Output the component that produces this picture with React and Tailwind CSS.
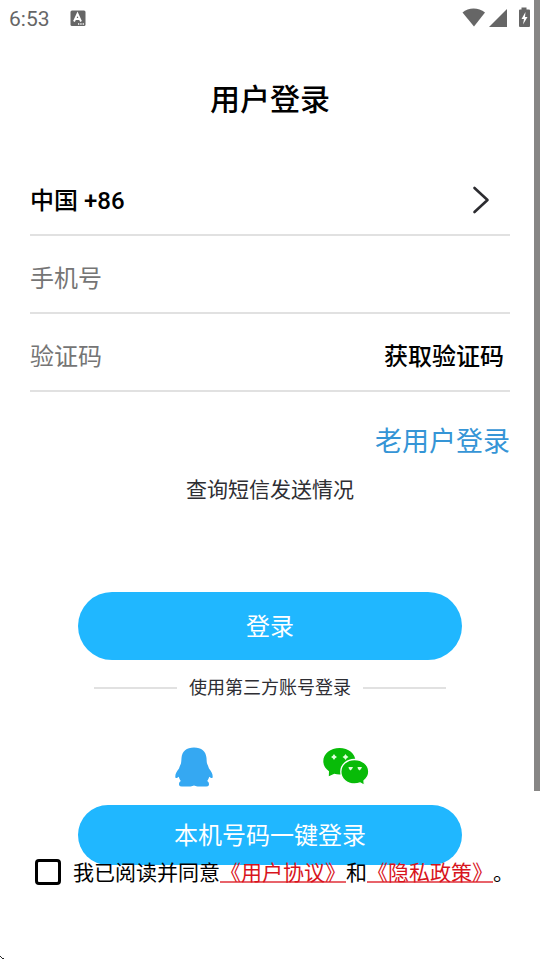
import React from "react";

function StatusBar() {
  return (
    <header className="flex h-9 items-center justify-between pl-[9px] pr-[10px] text-[#666]">
      <div className="flex items-center gap-5">
        <span className="pt-0.5 font-[Roboto,sans-serif] text-[21px] leading-9">6:53</span>
        <svg className="h-4 w-4" viewBox="0 0 16 16" aria-hidden="true">
          <rect x="0.5" y="0.5" width="15" height="15.5" rx="1.5" fill="#666" />
          <path d="M4 11.5 7.500 3.800 11 11.500M5.300 9h4.400" fill="none" stroke="#fff" strokeWidth="1.900" />
          <path d="M8 14h1.300M10.300 14h1.300M12.600 14h1.300" stroke="#fff" strokeWidth="1.300" />
        </svg>
      </div>
      <svg className="h-6 w-[68px]" viewBox="0 0 68 24" fill="#666" aria-hidden="true">
        <path d="M0.500 6.500C6.500 1 16.500 1 23 6.500L12 20.500Z" />
        <path d="M45 3V21H27Z" />
        <path d="M59.500 1.500h5v2h2.500a1 1 0 0 1 1 1v15.500a1 1 0 0 1-1 1H58a1 1 0 0 1-1-1V4.500a1 1 0 0 1 1-1h1.500Z" />
        <path d="M63.500 6 59.500 13H62L61 18.500 65.500 11H63Z" fill="#fff" />
      </svg>
    </header>
  );
}

function QQIcon() {
  return (
    <svg className="h-10 w-[38px]" viewBox="0 0 38 40" fill="#35a8f2" aria-hidden="true">
      <path d="M19 0.500C11.500 0.500 7 4.500 6.500 11C6.300 14 6.300 15.500 5.800 17C4.800 19 4.500 20 4 21.500C1.500 24.500 0.300 27 0.300 29.500C0.300 31.500 1.500 31.500 3.800 29.800C4.300 31.500 4.800 32.800 5.800 34C4.300 34.800 4 36 4 37.400C4 39 5.500 39.500 9 39.500H15.500C17 39.500 18 38.600 19 38.600C20 38.600 21 39.500 22.500 39.500H29C32.500 39.500 34 39 34 37.400C34 36 33.700 34.800 32.200 34C33.200 32.800 33.700 31.500 34.200 29.800C36.500 31.500 37.700 31.500 37.700 29.500C37.700 27 36.500 24.500 34 21.500C33.500 20 33.200 19 32.200 17C31.700 15.500 31.700 14 31.500 11C31 4.500 26.500 0.500 19 0.500Z" />
    </svg>
  );
}

function WeChatIcon() {
  return (
    <svg className="h-10 w-[46px]" viewBox="0 0 46 40" aria-hidden="true">
      <path d="M16.500 1C7.500 1 0.300 6.800 0.300 14.300C0.300 18.300 2.500 21.800 6 24.200L5.800 29.300L11.300 26.800C13 27.300 14.700 27.500 16.500 27.500C25.500 27.500 32.500 21.500 32.500 14.300C32.500 6.800 25.500 1 16.500 1Z" fill="#08bb08" />
      <path d="M31.500 12.500C23.800 12.500 17.800 17.800 17.800 24.800C17.800 31.700 23.800 37 31.500 37C33.500 37 35.500 36.600 37.200 35.900L41.300 38.300L41 33.700C44 31.500 45.800 28.400 45.800 24.800C45.800 17.800 39.500 12.500 31.500 12.500Z" fill="#08bb08" stroke="#fff" strokeWidth="1.300" />
      <g fill="#dfffdc">
        <path d="M11 7 12.200 8.800 14 10 12.200 11.200 11 13 9.800 11.200 8 10 9.800 8.800Z" />
        <path d="M22.500 7 23.700 8.800 25.500 10 23.700 11.200 22.500 13 21.300 11.200 19.500 10 21.300 8.800Z" />
        <path d="M25.500 20h4.500l-1 2-1.500 1.500-1.500-1.500Z" />
        <path d="M34.500 20H39l-1 2-1.500 1.500-1.500-1.500Z" />
      </g>
    </svg>
  );
}

const row = "flex h-[78px] w-full items-center border-b-2 border-[#e1e1e1] pt-[10px] text-2xl";
const field = "min-w-0 flex-1 bg-transparent text-black outline-none placeholder:text-[#757575] placeholder:opacity-100";
const pill = "block w-full rounded-full bg-[#20b7ff] pt-0.5 text-center text-2xl text-white";
const legal = "text-[#d8141c] underline decoration-[#e8636a] decoration-2 underline-offset-1";

export default function App() {
  return (
    <div className="relative min-h-screen overflow-hidden bg-white font-[Roboto,'Noto_Sans_CJK_SC',sans-serif] text-black">
      <StatusBar />
      <main className="px-[30px]">
        <h1 className="pt-[42px] text-center text-3xl font-medium leading-[44px]">用户登录</h1>
        <form className="pt-9" onSubmit={(e) => e.preventDefault()}>
          <button type="button" className={`${row} justify-between font-medium`}>
            <span>中国 +86</span>
            <svg className="mb-0.5 mr-5 h-7 w-[18px]" viewBox="0 0 18 28" fill="none" aria-hidden="true">
              <path d="M2.500 2 15.500 14 2.500 26" stroke="#2c2c30" strokeWidth="2.600" strokeLinecap="round" strokeLinejoin="round" />
            </svg>
          </button>
          <div className={row}>
            <input className={field} type="tel" aria-label="手机号" placeholder="手机号" />
          </div>
          <div className={row}>
            <input className={field} type="text" aria-label="验证码" placeholder="验证码" />
            <button type="button" className="pr-1.5 font-medium">获取验证码</button>
          </div>
          <div className="flex justify-end pt-[30px]">
            <a href="#old" className="text-[27px] leading-10 text-[#3595d6]">老用户登录</a>
          </div>
          <div className="flex justify-center pt-3">
            <a href="#sms" className="text-[21px] leading-8 text-[#2e2e33]">查询短信发送情况</a>
          </div>
          <div className="px-12 pt-[86px]">
            <button type="submit" className={`${pill} h-[68px]`}>登录</button>
          </div>
          <div className="flex items-center gap-3 px-16 pt-3">
            <span className="h-0.5 flex-1 bg-[#e1e1e1]" />
            <span className="text-lg leading-8 text-[#2e2e33]">使用第三方账号登录</span>
            <span className="h-0.5 flex-1 bg-[#e1e1e1]" />
          </div>
          <div className="flex justify-center gap-[110px] pl-1 pt-[43px]">
            <button type="button" aria-label="QQ"><QQIcon /></button>
            <button type="button" aria-label="微信"><WeChatIcon /></button>
          </div>
          <div className="px-12 pt-[18px]">
            <button type="button" className={`${pill} h-[60px]`}>本机号码一键登录</button>
          </div>
          <div className="relative -mt-[10px] flex items-center gap-3 pl-[5px] text-[21px] leading-8 [text-spacing-trim:space-all]">
            <input id="agree" type="checkbox" className="h-[26px] w-[26px] shrink-0 appearance-none rounded border-[3px] border-black bg-white checked:bg-[#20b7ff]" />
            <label htmlFor="agree" className="whitespace-nowrap pt-0.5">
              我已阅读并同意<a href="#terms" className={legal}>《用户协议》</a>和<a href="#privacy" className={legal}>《隐私政策》</a>。
            </label>
          </div>
        </form>
      </main>
      <div className="absolute right-0 top-0 h-[791px] w-1.5 bg-[#878685]" />
      <svg className="absolute bottom-0 left-0 h-1.5 w-1.5" viewBox="0 0 6 6" aria-hidden="true">
        <path d="M0 2h1v1H0ZM1 3h1v1H1ZM3 4h1v1H3ZM2 4h1v1H2Z" fill="#222" />
      </svg>
    </div>
  );
}
